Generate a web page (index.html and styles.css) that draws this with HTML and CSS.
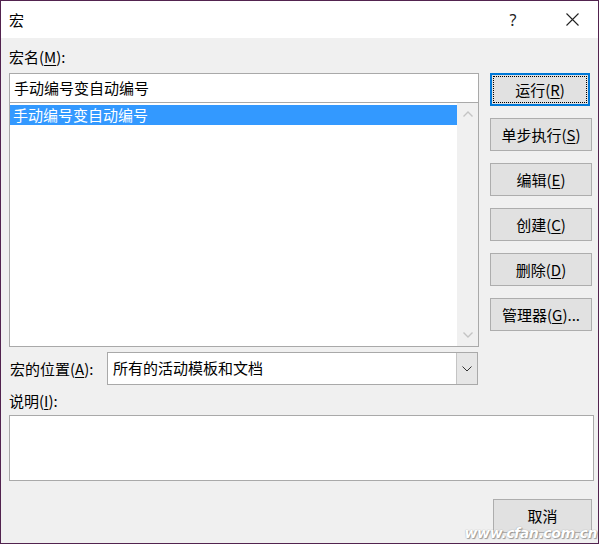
FILE: index.html
```html
<!DOCTYPE html>
<html lang="zh-CN">

<head>
    <meta charset="UTF-8">
    <title>宏</title>
    <link rel="stylesheet" href="styles.css">
</head>

<body>
    <div class="window">
        <div class="titlebar">
            <span class="title">宏</span>
            <span class="help">?</span>
            <span class="close">
                <svg width="13" height="13" viewBox="0 0 13 13">
                    <path d="M0.5 0.5 L12.5 12.5 M12.5 0.5 L0.5 12.5" stroke="#222" stroke-width="1.1" fill="none" />
                </svg>
            </span>
        </div>

        <div class="dialog">
            <div class="field-label">宏名(<u>M</u>):</div>

            <div class="main">
                <div class="left">
                    <div class="textbox">手动编号变自动编号</div>
                    <div class="listbox">
                        <div class="items">
                            <div class="item selected">手动编号变自动编号</div>
                        </div>
                        <div class="scrollbar">
                            <svg width="10" height="6" viewBox="0 0 10 6">
                                <path d="M0.5 5.5 L5 1 L9.5 5.5" stroke="#c4c4c4" stroke-width="1.4" fill="none" />
                            </svg>
                            <svg width="10" height="6" viewBox="0 0 10 6">
                                <path d="M0.5 0.5 L5 5 L9.5 0.5" stroke="#c4c4c4" stroke-width="1.4" fill="none" />
                            </svg>
                        </div>
                    </div>

                    <div class="location">
                        <span class="location-label">宏的位置(<u>A</u>):</span>
                        <div class="combo">
                            <span class="combo-value">所有的活动模板和文档</span>
                            <span class="combo-btn">
                                <svg width="10" height="6" viewBox="0 0 10 6">
                                    <path d="M0.5 0.5 L5 5 L9.5 0.5" stroke="#333" stroke-width="1" fill="none" />
                                </svg>
                            </span>
                        </div>
                    </div>
                </div>

                <div class="buttons">
                    <button class="btn btn-default">运行(<u>R</u>)</button>
                    <button class="btn">单步执行(<u>S</u>)</button>
                    <button class="btn">编辑(<u>E</u>)</button>
                    <button class="btn">创建(<u>C</u>)</button>
                    <button class="btn">删除(<u>D</u>)</button>
                    <button class="btn">管理器(<u>G</u>)...</button>
                </div>
            </div>

            <div class="field-label desc-label">说明(<u>I</u>):</div>
            <div class="desc"></div>

            <div class="footer">
                <button class="btn btn-cancel">取消</button>
            </div>
        </div>

        <div class="watermark">www.cfan.com.cn</div>
    </div>
</body>

</html>
```

FILE: styles.css
```css
:root {
    --frame-color: #52234f;
    --face-color: #f0f0f0;
    --field-border: #a9a9a9;
    --button-face: #e1e1e1;
    --button-border: #adadad;
    --accent-color: #0078d7;
    --select-color: #3399ff;
    --text-color: #000000;
}

body {
    margin: 0;
    background: #ffffff;
    font-family: "Noto Sans CJK SC", "Noto Sans", sans-serif;
    font-size: 15px;
    color: var(--text-color);
}

u {
    text-underline-offset: 2px;
}

.window {
    position: relative;
    box-sizing: border-box;
    width: 599px;
    height: 544px;
    border: 1px solid var(--frame-color);
    background: var(--face-color);
}

/* title bar */
.titlebar {
    display: flex;
    align-items: center;
    height: 37px;
    padding: 0 3px 0 8px;
    background: #ffffff;
}

.title {
    flex: 1;
    line-height: 20px;
}

.help {
    width: 46px;
    margin-right: 13px;
    text-align: center;
    font-family: "Noto Sans", sans-serif;
    font-size: 16px;
    color: #222;
}

.close {
    display: flex;
    justify-content: center;
    width: 46px;
}

/* dialog body */
.dialog {
    padding: 9px 4px 0 8px;
}

.field-label {
    line-height: 20px;
    height: 20px;
    margin-bottom: 6px;
}

.main {
    display: flex;
    gap: 11px;
}

.left {
    width: 470px;
}

.textbox {
    box-sizing: border-box;
    height: 30px;
    padding-left: 4px;
    border: 1px solid var(--field-border);
    background: #ffffff;
    line-height: 27px;
}

.listbox {
    box-sizing: border-box;
    display: flex;
    height: 244px;
    border: 1px solid var(--field-border);
    border-top: none;
    background: #ffffff;
}

.items {
    flex: 1;
    padding-top: 2px;
}

.item {
    height: 20px;
    padding-left: 3px;
    line-height: 20px;
}

.item.selected {
    background: var(--select-color);
    color: #ffffff;
}

.scrollbar {
    display: flex;
    flex-direction: column;
    justify-content: space-between;
    align-items: center;
    width: 21px;
    padding: 8px 0 8px;
    box-sizing: border-box;
    background: var(--face-color);
}

.location {
    display: flex;
    align-items: center;
    margin-top: 5px;
    height: 33px;
}

.location-label {
    width: 97px;
    padding-left: 1px;
}

.combo {
    box-sizing: border-box;
    display: flex;
    flex: 1;
    height: 33px;
    margin-right: 1px;
    border: 1px solid var(--field-border);
    background: #ffffff;
}

.combo-value {
    flex: 1;
    padding-left: 5px;
    line-height: 30px;
}

.combo-btn {
    display: flex;
    align-items: center;
    justify-content: center;
    width: 20px;
    border-left: 1px solid #c4c4c4;
    background: #e6e6e6;
}

/* command buttons */
.buttons {
    display: flex;
    flex-direction: column;
    gap: 12px;
    width: 102px;
}

.btn {
    box-sizing: border-box;
    height: 33px;
    padding: 0;
    border: 1px solid var(--button-border);
    background: var(--button-face);
    font-family: inherit;
    font-size: 15px;
    color: var(--text-color);
    line-height: 20px;
}

.btn-default {
    width: 100px;
    border: 2px solid var(--accent-color);
    outline: 1px dotted #000;
    outline-offset: -4px;
}

.desc-label {
    margin-top: 6px;
    margin-bottom: 4px;
}

.desc {
    box-sizing: border-box;
    height: 66px;
    border: 1px solid var(--field-border);
    background: #ffffff;
}

.footer {
    display: flex;
    justify-content: flex-end;
    margin-top: 18px;
}

.btn-cancel {
    width: 99px;
    height: 34px;
    margin-right: 2px;
}

/* site watermark over the corner */
.watermark {
    position: absolute;
    right: 1px;
    bottom: 3px;
    font-family: "DejaVu Sans", sans-serif;
    font-size: 14px;
    line-height: 14px;
    font-weight: bold;
    font-style: italic;
    letter-spacing: -0.4px;
    color: #ffffff;
    text-shadow: 0 0 1px #8a8a8a, 1px 1px 1px #9a9a9a;
}
```
